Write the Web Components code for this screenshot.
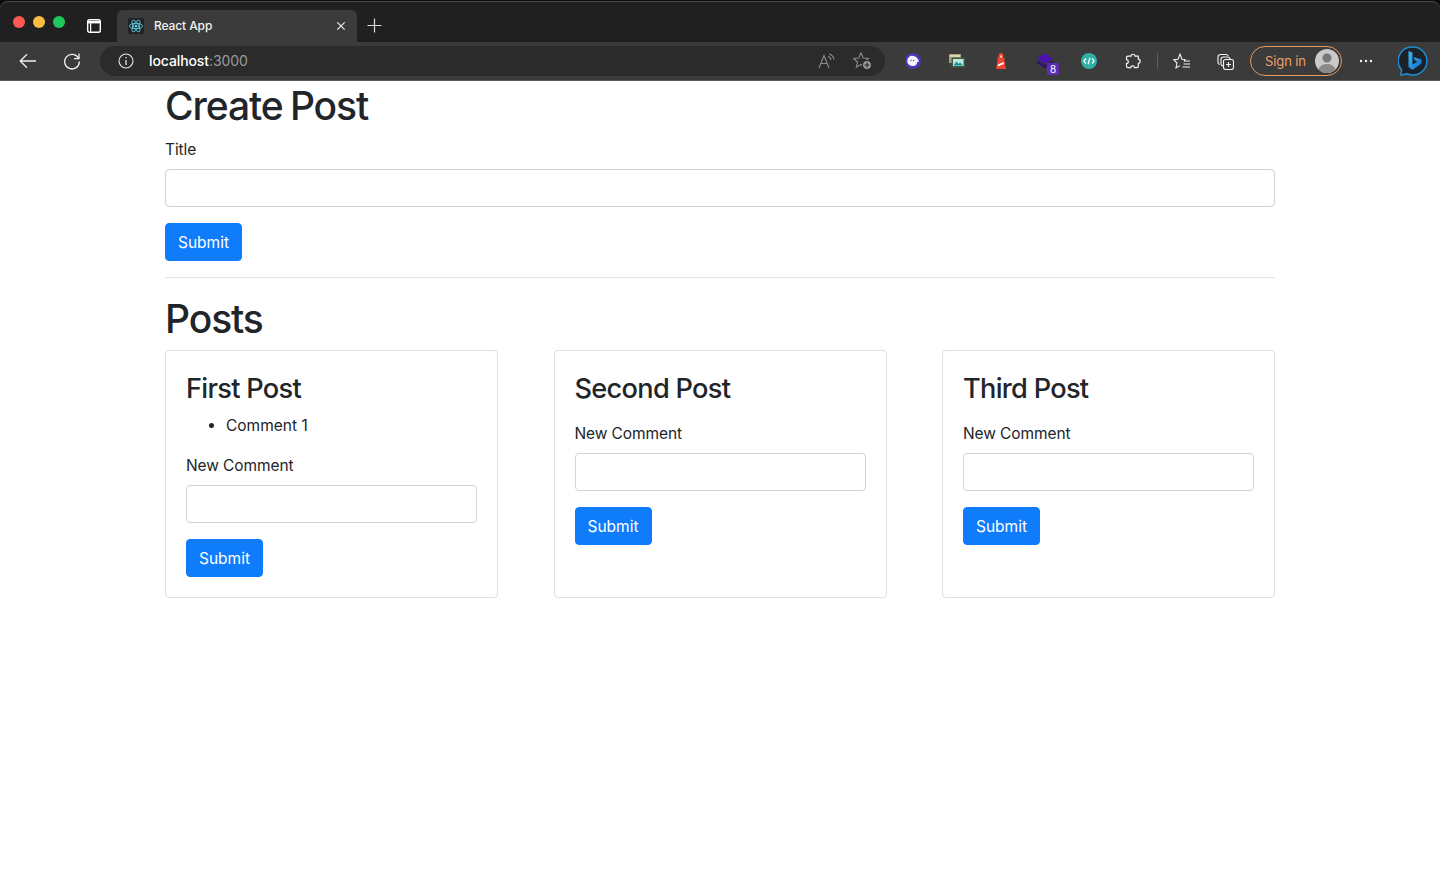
<!DOCTYPE html>
<html lang="en">
<head>
<meta charset="utf-8">
<title>React App</title>
<style>
  html, body { margin: 0; padding: 0; background: #fff; }
  body { font-family: Inter, "Liberation Sans", sans-serif; color: #212529; }
</style>
</head>
<body>
<browser-tabstrip></browser-tabstrip>
<browser-toolbar></browser-toolbar>
<page-container>
  <page-heading style="margin-bottom:7px">Create Post</page-heading>
  <form-field label="Title"></form-field>
  <submit-button></submit-button>
  <page-rule></page-rule>
  <page-heading>Posts</page-heading>
  <post-list>
    <post-card title="First Post" comments="Comment 1"></post-card>
    <post-card title="Second Post"></post-card>
    <post-card title="Third Post"></post-card>
  </post-list>
</page-container>

<script>
class BrowserTabstrip extends HTMLElement{
    constructor(){
        super()
        this.attachShadow({mode:'open'})
        this.shadowRoot.innerHTML = `
        <style>
            :host{display:flex;height:42px;background:#0c0c0c;box-sizing:border-box;padding-top:1px;font-family:Inter,"Liberation Sans",sans-serif}
            .strip{flex:1;display:flex;align-items:stretch;background:#202020;border-radius:8px 8px 0 0;box-shadow:inset 0 1px 0 #484848;padding-top:10px}
            .lights{display:flex;gap:8px;width:59px;padding:5px 0 0 13px}
            .lights i{width:12px;height:12px;border-radius:50%;display:block}
            .side{width:44px;margin-right:1px;display:flex;justify-content:center;align-items:center;box-sizing:border-box;padding-bottom:1px}
            .tab{width:240px;margin-top:-1px;background:#3b3b3b;border-radius:6px 6px 0 0;display:flex;align-items:center;padding:0 8px 1px 11px;box-sizing:border-box;color:#f2f2f2;font-size:12px;font-weight:500}
            .fav{width:16px;height:16px;background:#222;border-radius:2px;margin-right:10px;display:flex}
            .name{flex:1;letter-spacing:-.1px}
            .plus{width:35px;display:flex;justify-content:center;align-items:center;padding-bottom:2px}
        </style>
        <div class="strip">
        <div class="lights"><i style="background:#fb5a57"></i><i style="background:#fdbb42"></i><i style="background:#1fc95a"></i></div>
        <div class="side"><svg width="14" height="14" viewBox="0 0 14 14" fill="none" stroke="#fff" stroke-width="1.4"><rect x=".7" y=".7" width="12.6" height="12.6" rx="1.8"/><path d="M.7 3.200H13.300" stroke-width="2.400"/><path d="M3.600 3.600V13.300" stroke-width="1.200"/></svg></div>
        <div class="tab">
            <span class="fav"><svg width="16" height="16" viewBox="-8 -8 16 16" fill="none" stroke="#61dafb" stroke-width=".8"><circle r="1.3" fill="#61dafb" stroke="none"/><ellipse rx="6.6" ry="2.6"/><ellipse rx="6.6" ry="2.6" transform="rotate(60)"/><ellipse rx="6.6" ry="2.6" transform="rotate(120)"/></svg></span>
            <span class="name">React App</span>
            <svg width="16" height="16" viewBox="0 0 16 16" stroke="#eee" stroke-width="1.2" fill="none"><path d="M4.3 4.3L11.7 11.7M11.7 4.3L4.3 11.7"/></svg>
        </div>
        <div class="plus"><svg width="15" height="15" viewBox="0 0 15 15" stroke="#ddd" stroke-width="1.2" fill="none"><path d="M7.5 .5V14.5M.5 7.5H14.5"/></svg></div>
        </div>`
    }
}

class ToolButton extends HTMLElement{
    constructor(){
        super()
        this.attachShadow({mode:'open'})
        this.shadowRoot.innerHTML = `
        <style>
            :host{display:flex;width:44px;height:38px;justify-content:center;align-items:center;position:relative;flex:none}
        </style>
        <slot></slot>`
    }
}

class BrowserToolbar extends HTMLElement{
    constructor(){
        super()
        this.attachShadow({mode:'open'})
        this.shadowRoot.innerHTML = `
        <style>
            :host{display:flex;height:39px;background:#3b3b3b;border-bottom:1px solid #5c5c5c;box-sizing:border-box;padding:0 6px;align-items:center;font-family:Inter,"Liberation Sans",sans-serif}
            .address{flex:1;height:30px;margin:0 6px;background:#2b2b2b;border-radius:15px;display:flex;align-items:center;padding:0 13px 0 18px;color:#fff;font-size:14px}
            .address .info{margin-right:15px;display:flex}
            .host{font-weight:500;letter-spacing:-.1px;flex:1;padding-bottom:1px}
            .host span{color:#9a9a9a;font-weight:400}
            .address .right{display:flex;gap:18px;align-items:center}
            .sep{width:1px;height:16px;background:#5e5e5e;margin:0 2px;flex:none}
            .signin{flex:none;width:92px;height:30px;margin:0 2px;border:1px solid #e49a63;border-radius:15px;box-sizing:border-box;display:flex;align-items:center;justify-content:space-between;padding:0 2px 0 14px;color:#ee9f68;font-size:13px;letter-spacing:-.1px}
            .avatar{width:24px;height:24px;display:block}
            .dots{margin-right:2px}
            .badge{position:absolute;left:24px;top:21px;width:12px;height:12px;background:#5b2fb0;border-radius:2px;color:#fff;font-size:10px;line-height:12px;text-align:center}
            .bing{margin-left:2px}
        </style>
        <tool-button><svg width="18" height="16" viewBox="0 0 18 16" fill="none" stroke="#f2f2f2" stroke-width="1.3"><path d="M17 8H1.2M8 1.2L1.2 8L8 14.8"/></svg></tool-button>
        <tool-button><svg width="18" height="18" viewBox="0 0 18 18" fill="none" stroke="#f2f2f2" stroke-width="1.3"><path d="M15.6 6.5A7.3 7.3 0 1 0 16.3 9.5"/><path d="M16 1.6V6.6H11"/></svg></tool-button>
        <div class="address">
            <span class="info"><svg width="16" height="16" viewBox="0 0 16 16" fill="none" stroke="#e8e8e8" stroke-width="1.1"><circle cx="8" cy="8" r="7"/><path d="M8 7V12" stroke-width="1.3"/><circle cx="8" cy="4.8" r=".8" fill="#e8e8e8" stroke="none"/></svg></span>
            <span class="host">localhost<span>:3000</span></span>
            <span class="right">
                <svg width="17" height="16" viewBox="0 0 17 16" fill="none" stroke="#8d8d8d" stroke-width="1.1"><path d="M1 15L6 2.500L11 15M2.800 10.500H9.200"/><path d="M10 3.500A4 4 0 0 1 13 7M11 1A7 7 0 0 1 16 6.500"/></svg>
                <svg width="19" height="18" viewBox="0 0 19 18" fill="none" stroke="#8d8d8d" stroke-width="1.1"><path d="M8 1L10.200 6L15.500 6.500L11.500 10L12.700 15.200L8 12.500L3.300 15.200L4.500 10L.5 6.500L5.800 6Z"/><circle cx="14" cy="13" r="4.500" fill="#9a9a9a" stroke="#2b2b2b"/><path d="M14 10.500V15.500M11.500 13H16.500" stroke="#2b2b2b" stroke-width="1.200"/></svg>
            </span>
        </div>
        <tool-button><svg width="16" height="16" viewBox="0 0 16 16"><circle cx="8" cy="8" r="8" fill="#4b35b5"/><path d="M2.300 8C2.300 4.800 4.600 2.800 7.600 2.800C10.500 2.800 12.800 5 13.700 7.800C14 8.900 13 9.300 12.200 9C12.200 11.200 10.600 13 8.300 13C5 13 2.300 11.200 2.300 8Z" fill="#f6f2ff"/><circle cx="6" cy="7.400" r=".7" fill="#4b35b5"/><circle cx="8.500" cy="7.400" r=".7" fill="#4b35b5"/></svg></tool-button>
        <tool-button><svg width="16" height="14" viewBox="0 0 16 14"><rect x="0" y="0" width="12" height="9" fill="#a89f7e"/><rect x="1" y="1" width="10" height="2" fill="#e0d7a8"/><rect x="2.500" y="3.500" width="13.500" height="10" fill="#3f5e45"/><rect x="4" y="5" width="10.500" height="7" fill="#bfe6dd"/><path d="M4.500 11.500L7.500 7.500L9.500 10L11 8.500L14 11.500Z" fill="#0f8f9a"/></svg></tool-button>
        <tool-button><svg width="10" height="16" viewBox="0 0 10 16"><path d="M5 0C6.500 0 7.500 1 7.500 2.500V5H8.500V6.500H8.300L10 16H0L1.700 6.500H1.500V5H2.500V2.500C2.500 1 3.500 0 5 0Z" fill="#ed4430"/><circle cx="5" cy="3.500" r="1.200" fill="#f6c9a0"/><path d="M2 11.500L7.500 9L8 11L1.700 13.500Z" fill="#fff"/></svg></tool-button>
        <tool-button><svg width="16" height="16" viewBox="0 0 16 16"><path d="M0 7.500L8 12L16 7.500V10L8 15.500L0 10Z" fill="#2d1370"/><path d="M8 0L16 5.500L8 11L0 5.500Z" fill="#4a13ad"/></svg><span class="badge">8</span></tool-button>
        <tool-button><svg width="16" height="16" viewBox="0 0 16 16" fill="none" stroke="#fff" stroke-width="1.200"><circle cx="8" cy="8" r="8" fill="#2fb1a5" stroke="none"/><path d="M5 5.500L2.800 8L5 10.500M11 5.500L13.200 8L11 10.500M9 4.800L7 11.200"/></svg></tool-button>
        <tool-button><svg width="16" height="16" viewBox="0 0 16 16" fill="none" stroke="#f2f2f2" stroke-width="1.2"><path d="M6 3.200C6 .6 10 .6 10 3.200H13.300V6.200C15.800 6.200 15.800 10.400 13.300 10.400V13.500C13.300 14.200 12.800 14.700 12 14.700H9.500C9.500 12.300 5.800 12.300 5.800 14.700H3C2 14.700 1.500 14.200 1.500 13.300V10.600C3.900 10.600 3.900 6.600 1.500 6.600V4.500C1.500 3.700 2 3.200 3 3.200Z"/></svg></tool-button>
        <span class="sep"></span>
        <tool-button><svg width="18" height="17" viewBox="0 0 18 17" fill="none" stroke="#f2f2f2" stroke-width="1.1"><path d="M11 8.500L12 6.500L9 6.200L7 1.200L5 6.200L.8 6.700L4 10L3 15L7 12.600"/><path d="M11 8H17M10.500 11H17M9.500 14H17"/></svg></tool-button>
        <tool-button><svg width="18" height="17" viewBox="0 0 18 17" fill="none" stroke="#f2f2f2" stroke-width="1.1"><path d="M2.500 11.500C1.500 11 1 10.300 1 9.500V4C1 2.500 2 1.500 3.500 1.500H9C10 1.500 10.800 2 11.200 3"/><rect x="4" y="4" width="9" height="9" rx="2.500"/><rect x="6.500" y="6.500" width="10" height="10" rx="2" fill="#3b3b3b"/><path d="M11.500 9V14M9 11.500H14"/></svg></tool-button>
        <div class="signin"><span>Sign in</span><svg class="avatar" viewBox="0 0 24 24"><circle cx="12" cy="12" r="12" fill="#c9c9c9"/><circle cx="12" cy="9" r="4.500" fill="#777"/><path d="M3.500 20.500C5 16.500 8 15 12 15C16 15 19 16.500 20.500 20.500A12 12 0 0 1 3.500 20.500Z" fill="#8a8a8a"/></svg></div>
        <tool-button class="dots"><svg width="14" height="4" viewBox="0 0 14 4" fill="#f2f2f2"><circle cx="2" cy="2" r="1.200"/><circle cx="7" cy="2" r="1.200"/><circle cx="12" cy="2" r="1.200"/></svg></tool-button>
        <tool-button><svg class="bing" width="30" height="30" viewBox="0 0 30 30"><defs><linearGradient id="b" x1="0" y1="0" x2="1" y2="1"><stop offset="0" stop-color="#37bdf0"/><stop offset="1" stop-color="#1668d8"/></linearGradient></defs><path d="M15 1A14 14 0 1 1 9 27.700L3 29L3.500 24A14 14 0 0 1 15 1Z" fill="#1d2128" stroke="#1c8fd6" stroke-width="1.500"/><path d="M10.500 5L14.500 6.500V18.500L19.500 15.700L17 14.500L15.500 11L23.500 13.500V17.500L14.500 24L10.500 21Z" fill="url(#b)"/></svg></tool-button>`
    }
}

class PageContainer extends HTMLElement{
    constructor(){
        super()
        this.attachShadow({mode:'open'})
        this.shadowRoot.innerHTML = `
        <style>
            :host{display:block;width:1110px;margin:0 auto;padding-top:1px;font-family:Inter,"Liberation Sans",sans-serif;font-size:15.5px;line-height:24px;color:#212529}
        </style>
        <slot></slot>`
    }
}

class PageHeading extends HTMLElement{
    constructor(){
        super()
        this.attachShadow({mode:'open'})
        this.shadowRoot.innerHTML = `
        <style>
            :host{display:block;font-size:39px;line-height:48px;font-weight:500;letter-spacing:-1.1px;word-spacing:-2px;margin-bottom:8px;color:#212529}
        </style>
        <slot></slot>`
    }
}

class PageRule extends HTMLElement{
    constructor(){
        super()
        this.attachShadow({mode:'open'})
        this.shadowRoot.innerHTML = `
        <style>
            :host{display:block;height:1px;background:#e3e3e4;margin:16px 0 17px}
        </style>`
    }
}

class FormField extends HTMLElement{
    constructor(){
        super()
        this.attachShadow({mode:'open'})
        this.shadowRoot.innerHTML = `
        <style>
            :host{display:block;margin-bottom:16px}
            label{display:block;padding-top:1px;margin-bottom:7px;line-height:24px;letter-spacing:-.1px}
            input{display:block;width:100%;height:38px;box-sizing:border-box;border:1px solid #ced4da;border-radius:4px;background:#fff;padding:6px 12px;font:inherit;outline:none}
        </style>
        <label>${this.getAttribute('label')}</label>
        <input type="text">`
    }
}

class SubmitButton extends HTMLElement{
    constructor(){
        super()
        this.attachShadow({mode:'open'})
        this.shadowRoot.innerHTML = `
        <style>
            :host{display:block}
            button{display:block;width:77px;height:38px;padding:0;border:1px solid #0f7cfb;border-radius:4px;background:#0f7cfb;color:#fff;font-family:inherit;font-size:15.5px}
        </style>
        <button>Submit</button>`
    }
}

class PostList extends HTMLElement{
    constructor(){
        super()
        this.attachShadow({mode:'open'})
        this.shadowRoot.innerHTML = `
        <style>
            :host{display:flex;flex-flow:row wrap;justify-content:space-between;margin-top:-1px}
        </style>
        <slot></slot>`
    }
}

class PostCard extends HTMLElement{
    constructor(){
        super()
        this.attachShadow({mode:'open'})
        const comments = (this.getAttribute('comments') || '').split('|').filter(Boolean)
        const list = comments.length ? `<ul>${comments.map(c => `<li>${c}</li>`).join('')}</ul>` : '<ul class="empty"></ul>'
        this.shadowRoot.innerHTML = `
        <style>
            :host{display:block;width:333px;height:248px;box-sizing:border-box;border:1px solid #dfdfdf;border-radius:4px;padding:20px;margin-bottom:20px}
            h3{margin:1px 0 7px;font-size:27.2px;line-height:34px;font-weight:500;letter-spacing:-.72px}
            ul{margin:0 0 15px;padding:1px 0 0 40px}
            ul.empty{margin:0;padding:0;height:8px}
            li{line-height:24px}
        </style>
        <h3>${this.getAttribute('title')}</h3>
        ${list}
        <form-field label="New Comment"></form-field>
        <submit-button></submit-button>`
    }
}

customElements.define('browser-tabstrip',BrowserTabstrip)
customElements.define('tool-button',ToolButton)
customElements.define('browser-toolbar',BrowserToolbar)
customElements.define('page-container',PageContainer)
customElements.define('page-heading',PageHeading)
customElements.define('page-rule',PageRule)
customElements.define('form-field',FormField)
customElements.define('submit-button',SubmitButton)
customElements.define('post-list',PostList)
customElements.define('post-card',PostCard)
</script>
</body>
</html>
